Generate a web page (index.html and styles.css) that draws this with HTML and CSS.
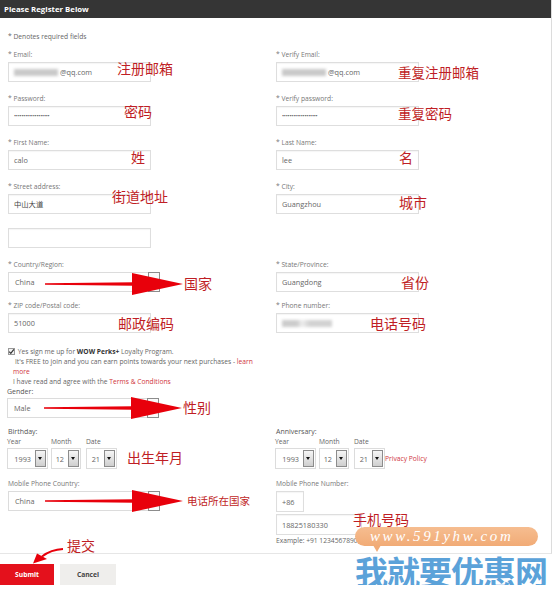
FILE: index.html
```html
<!DOCTYPE html>
<html lang="en">
<head>
    <meta charset="UTF-8">
    <meta name="viewport" content="width=device-width, initial-scale=1.0">
    <title>Please Register Below</title>
    <link rel="stylesheet" href="styles.css">
</head>
<body>
    <div class="register">
        <div class="register-head">Please Register Below</div>
        <div class="register-body">
            <p class="hint">* Denotes required fields</p>

            <div class="form-row first">
                <div class="field">
                    <label>* Email:</label>
                    <div class="line">
                        <div class="box"><span class="masked"></span>@qq.com</div>
                        <span class="note note-email">注册邮箱</span>
                    </div>
                </div>
                <div class="field">
                    <label>* Verify Email:</label>
                    <div class="line">
                        <div class="box"><span class="masked"></span>@qq.com</div>
                        <span class="note note-verify-email">重复注册邮箱</span>
                    </div>
                </div>
            </div>

            <div class="form-row">
                <div class="field">
                    <label>* Password:</label>
                    <div class="line">
                        <div class="box"><span class="dots">•••••••••••••••••••</span></div>
                        <span class="note note-password">密码</span>
                    </div>
                </div>
                <div class="field">
                    <label>* Verify password:</label>
                    <div class="line">
                        <div class="box"><span class="dots">•••••••••••••••••••</span></div>
                        <span class="note note-verify-password">重复密码</span>
                    </div>
                </div>
            </div>

            <div class="form-row">
                <div class="field">
                    <label>* First Name:</label>
                    <div class="line">
                        <div class="box">calo</div>
                        <span class="note note-first">姓</span>
                    </div>
                </div>
                <div class="field">
                    <label>* Last Name:</label>
                    <div class="line">
                        <div class="box">lee</div>
                        <span class="note note-last">名</span>
                    </div>
                </div>
            </div>

            <div class="form-row">
                <div class="field">
                    <label>* Street address:</label>
                    <div class="line">
                        <div class="box box-dark">中山大道</div>
                        <span class="note note-street">街道地址</span>
                    </div>
                </div>
                <div class="field">
                    <label>* City:</label>
                    <div class="line">
                        <div class="box">Guangzhou</div>
                        <span class="note note-city">城市</span>
                    </div>
                </div>
            </div>

            <div class="form-row street-2">
                <div class="field">
                    <div class="box"></div>
                </div>
                <div></div>
            </div>

            <div class="form-row">
                <div class="field">
                    <label>* Country/Region:</label>
                    <div class="line">
                        <div class="select wide">
                            <span class="value">China</span>
                            <span class="caret"></span>
                        </div>
                        <svg class="pointer pointer-country" width="138" height="22" viewBox="0 0 138 22">
                            <polygon points="0,10.3 89,9.3 89,12.7 0,11.7" fill="#e8000b"/>
                            <polygon points="87,0 138,11 87,22" fill="#e8000b"/>
                        </svg>
                        <span class="note note-country">国家</span>
                    </div>
                </div>
                <div class="field">
                    <label>* State/Province:</label>
                    <div class="line">
                        <div class="box">Guangdong</div>
                        <span class="note note-state">省份</span>
                    </div>
                </div>
            </div>

            <div class="form-row zip-row">
                <div class="field">
                    <label>* ZIP code/Postal code:</label>
                    <div class="line">
                        <div class="box">51000</div>
                        <span class="note note-zip">邮政编码</span>
                    </div>
                </div>
                <div class="field">
                    <label>* Phone number:</label>
                    <div class="line">
                        <div class="box"><span class="masked masked-phone"></span></div>
                        <span class="note note-phone">电话号码</span>
                    </div>
                </div>
            </div>

            <div class="perks">
                <p class="perk-check"><span class="checkbox"><svg width="7" height="7" viewBox="0 0 7 7"><path d="M1.2 3.6 L2.8 5.3 L5.9 1.3" fill="none" stroke="#333" stroke-width="1.2"/></svg></span> Yes sign me up for <b>WOW Perks+</b> Loyalty Program.</p>
                <p class="perk-text">It's FREE to join and you can earn points towards your next purchases - <a href="#">learn more</a></p>
                <p class="perk-terms">I have read and agree with the <a href="#">Terms &amp; Conditions</a></p>
                <div class="field">
                    <label class="label-dark">Gender:</label>
                    <div class="line">
                        <div class="select wide">
                            <span class="value">Male</span>
                            <span class="caret"></span>
                        </div>
                        <svg class="pointer pointer-gender" width="138" height="22" viewBox="0 0 138 22">
                            <polygon points="0,10.3 89,9.3 89,12.7 0,11.7" fill="#e8000b"/>
                            <polygon points="87,0 138,11 87,22" fill="#e8000b"/>
                        </svg>
                        <span class="note note-gender">性别</span>
                    </div>
                </div>
            </div>

            <div class="form-row dates-row">
                <div class="field">
                    <label class="label-dark">Birthday:</label>
                    <div class="line date-line">
                        <div class="date-part">
                            <span class="part-label">Year</span>
                            <div class="select small year"><span class="value">1993</span><span class="caret"></span></div>
                        </div>
                        <div class="date-part">
                            <span class="part-label">Month</span>
                            <div class="select small month"><span class="value">12</span><span class="caret"></span></div>
                        </div>
                        <div class="date-part">
                            <span class="part-label">Date</span>
                            <div class="select small day"><span class="value">21</span><span class="caret"></span></div>
                        </div>
                        <span class="note note-birth">出生年月</span>
                    </div>
                </div>
                <div class="field">
                    <label class="label-dark">Anniversary:</label>
                    <div class="line date-line">
                        <div class="date-part">
                            <span class="part-label">Year</span>
                            <div class="select small year"><span class="value">1993</span><span class="caret"></span></div>
                        </div>
                        <div class="date-part">
                            <span class="part-label">Month</span>
                            <div class="select small month"><span class="value">12</span><span class="caret"></span></div>
                        </div>
                        <div class="date-part">
                            <span class="part-label">Date</span>
                            <div class="select small day"><span class="value">21</span><span class="caret"></span></div>
                        </div>
                        <a class="privacy" href="#">Privacy Policy</a>
                    </div>
                </div>
            </div>

            <div class="form-row mobile-row">
                <div class="field">
                    <label>Mobile Phone Country:</label>
                    <div class="line">
                        <div class="select wide">
                            <span class="value">China</span>
                            <span class="caret"></span>
                        </div>
                        <svg class="pointer pointer-mobile" width="138" height="22" viewBox="0 0 138 22">
                            <polygon points="0,10.3 89,9.3 89,12.7 0,11.7" fill="#e8000b"/>
                            <polygon points="87,0 138,11 87,22" fill="#e8000b"/>
                        </svg>
                        <span class="note note-mobile-country">电话所在国家</span>
                    </div>
                </div>
                <div class="field">
                    <label>Mobile Phone Number:</label>
                    <div class="box box-code">+86</div>
                    <div class="line phone-line">
                        <div class="box box-phone">18825180330</div>
                        <span class="note note-mobile">手机号码</span>
                    </div>
                    <p class="example">Example: +91 1234567890</p>
                </div>
            </div>
        </div>
    </div>

    <div class="actions">
        <button class="btn btn-submit">Submit</button>
        <button class="btn btn-cancel">Cancel</button>
        <span class="note note-submit">提交</span>
        <svg class="submit-pointer" width="40" height="24" viewBox="0 0 40 24">
            <path d="M35 5 Q23 5.5 14 12.5" fill="none" stroke="#e8000b" stroke-width="2"/>
            <polygon points="5,19.5 9,9.5 19,15" fill="#e8000b"/>
        </svg>
    </div>

    <div class="watermark">
        <div class="watermark-url">www.591yhw.com</div>
        <div class="watermark-name">我就要优惠网</div>
    </div>
</body>
</html>
```

FILE: styles.css
```css
* {
    box-sizing: border-box;
}

body {
    margin: 0;
    background: #fff;
    font-family: "Open Sans", "Noto Sans CJK SC", sans-serif;
    color: #666;
    position: relative;
}

.register {
    width: 552px;
    border-right: 1px solid #dcdcdc;
    border-bottom: 1px solid #e6e6e6;
}

.register-head {
    height: 18px;
    background: #353535;
    color: #fff;
    font-weight: bold;
    font-size: 7.8px;
    line-height: 18px;
    padding-left: 4px;
}

.register-body {
    padding: 14px 8px 7px;
}

.hint {
    margin: 0;
    font-size: 6.7px;
    line-height: 10px;
}

.form-row {
    display: grid;
    grid-template-columns: 268px 1fr;
    margin-top: 12px;
}

.form-row.first {
    margin-top: 8px;
}

.form-row.street-2 {
    margin-top: 14px;
}

.form-row.zip-row {
    margin-top: 9px;
}

.form-row.dates-row {
    margin-top: 9px;
}

.form-row.mobile-row {
    margin-top: 10px;
}

.field label {
    display: block;
    font-size: 6.7px;
    line-height: 10px;
    margin-bottom: 2px;
    color: #777;
}

.field label.label-dark {
    color: #555;
    font-size: 7px;
    margin-bottom: 0;
}

.line {
    position: relative;
    display: flex;
    align-items: flex-start;
}

.box {
    width: 143px;
    height: 20px;
    border: 1px solid #dedede;
    box-shadow: inset 0 1px 1px rgba(0, 0, 0, 0.04);
    font-size: 7.3px;
    padding-left: 5px;
    color: #666;
    display: flex;
    align-items: center;
}

.box-dark {
    color: #444;
}

.masked {
    display: inline-block;
    width: 44px;
    height: 7px;
    margin-right: 2px;
    background: #c9c9c9;
    filter: blur(1.6px);
}

.masked-phone {
    width: 50px;
    background: linear-gradient(90deg, #ccc 0, #ccc 30%, #eee 40%, #d2d2d2 55%, #d2d2d2 100%);
}

.dots {
    font-size: 5.5px;
    letter-spacing: -0.2px;
    color: #555;
}

/* red annotations */
.note {
    position: absolute;
    font-family: "Noto Sans CJK SC", sans-serif;
    font-size: 14px;
    line-height: 14px;
    color: #bf1e25;
    white-space: nowrap;
}

.note-email { left: 109px; top: -1px; }
.note-password { left: 116px; top: -2px; }
.note-first { left: 123px; top: 0; }
.note-street { left: 104px; top: -5px; }
.note-country { left: 176px; top: 4px; }
.note-zip { left: 110px; top: 3px; }
.note-gender { left: 176px; top: 2px; }
.note-birth { left: 120px; top: 13px; }
.note-mobile-country { left: 179px; top: 4px; font-size: 10.5px; line-height: 11px; }

.note-verify-email { left: 122px; top: 3px; font-size: 13.5px; }
.note-verify-password { left: 122px; top: 0; font-size: 13.5px; }
.note-last { left: 123px; top: 0; }
.note-city { left: 123px; top: 1px; }
.note-state { left: 125px; top: 3px; }
.note-phone { left: 94px; top: 3px; }
.note-mobile { left: 77px; top: -2px; }

.pointer {
    position: absolute;
    left: 37px;
}

.pointer-country { top: 1px; }
.pointer-gender { top: -1px; }
.pointer-mobile { top: -1px; }

/* selects */
.select {
    display: flex;
    height: 20px;
    border: 1px solid #dcdcdc;
    font-size: 7.3px;
    color: #666;
}

.select.wide {
    width: 152px;
}

.select .value {
    flex: 1;
    display: flex;
    align-items: center;
    padding-left: 6px;
}

.select .caret {
    width: 11px;
    border: 1px solid #8c8c8c;
    background: linear-gradient(#f6f6f6, #cfcfcf);
    position: relative;
}

.select.wide .caret {
    width: 12px;
    margin: -1px -1px -1px 0;
    background: #fafafa;
}

.select .caret::after {
    content: "";
    position: absolute;
    left: 50%;
    top: 50%;
    margin: -1.5px 0 0 -2.5px;
    border-left: 2.5px solid transparent;
    border-right: 2.5px solid transparent;
    border-top: 3.5px solid #111;
}

.select.small {
    height: 21px;
}

.select.small .value {
    justify-content: flex-end;
    padding: 0 4px 0 0;
}

.select.small .caret {
    margin: 1px 1px 1px 0;
}

.select.year { width: 41px; }
.select.month { width: 30px; }
.select.day { width: 31px; }

.date-line {
    gap: 3px;
    margin-left: -1px;
}

.date-part {
    display: flex;
    flex-direction: column;
}

.date-part + .date-part + .date-part {
    margin-left: 2px;
}

.part-label {
    font-size: 6.7px;
    line-height: 10px;
    color: #666;
    margin-bottom: 1px;
}

.privacy {
    align-self: flex-end;
    margin: 0 0 6px -3px;
    font-size: 6.7px;
    color: #d0343c;
    text-decoration: none;
}

/* perks */
.perks {
    margin-top: 14px;
}

.perks p {
    margin: 0;
    font-size: 6.7px;
    line-height: 10px;
    color: #666;
}

.perks b {
    color: #333;
}

.perks a {
    color: #d0343c;
    text-decoration: none;
}

.checkbox {
    display: inline-block;
    vertical-align: -1px;
    width: 7px;
    height: 7px;
    border: 1px solid #999;
    background: #f2f2f2;
    margin-right: 1px;
    position: relative;
}

.checkbox svg {
    position: absolute;
    left: -1px;
    top: -1px;
}

.perk-text {
    padding-left: 5px;
    text-indent: 2px;
    width: 255px;
}

.perk-terms {
    padding-left: 5px;
}

.perks .field {
    margin-left: -1px;
}

.perks .field label {
    margin-bottom: 1px;
}

/* mobile number */
.box-code {
    width: 28px;
    height: 21px;
}

.phone-line {
    margin-top: 2px;
}

.box-phone {
    width: 86px;
    height: 21px;
}

.example {
    margin: 1px 0 0;
    font-size: 6.7px;
    line-height: 10px;
    color: #666;
}

/* buttons */
.actions {
    position: relative;
    display: flex;
    gap: 6px;
    padding-top: 10px;
}

.btn {
    height: 21px;
    border: none;
    font-family: "Open Sans", sans-serif;
    font-size: 6.7px;
    font-weight: bold;
    padding: 0;
    cursor: pointer;
}

.btn-submit {
    width: 54px;
    background: #e4111c;
    color: #fff;
}

.btn-cancel {
    width: 56px;
    background: #efeeec;
    color: #444;
}

.note-submit {
    left: 67px;
    top: -16px;
}

.submit-pointer {
    position: absolute;
    left: 28px;
    top: -10px;
}

/* watermark over the bottom corner */
.watermark {
    position: absolute;
    left: 355px;
    top: 527px;
}

.watermark-url {
    position: relative;
    width: 183px;
    height: 19px;
    border-radius: 10px;
    background: linear-gradient(#f6bd90, #f1ab76);
    color: #fff;
    font-family: "Liberation Serif", serif;
    font-style: italic;
    font-size: 15px;
    line-height: 19px;
    letter-spacing: 2.6px;
    padding-left: 15px;
    white-space: nowrap;
}

.watermark-url::after {
    content: "";
    position: absolute;
    left: 18px;
    bottom: -6px;
    border-left: 4px solid transparent;
    border-right: 4px solid transparent;
    border-top: 7px solid #f1ab76;
}

.watermark-name {
    padding-top: 8px;
    font-family: "Noto Sans CJK SC", sans-serif;
    font-weight: bold;
    font-size: 33px;
    line-height: 34px;
    letter-spacing: -1px;
    color: #5ba2d9;
    white-space: nowrap;
}
```
